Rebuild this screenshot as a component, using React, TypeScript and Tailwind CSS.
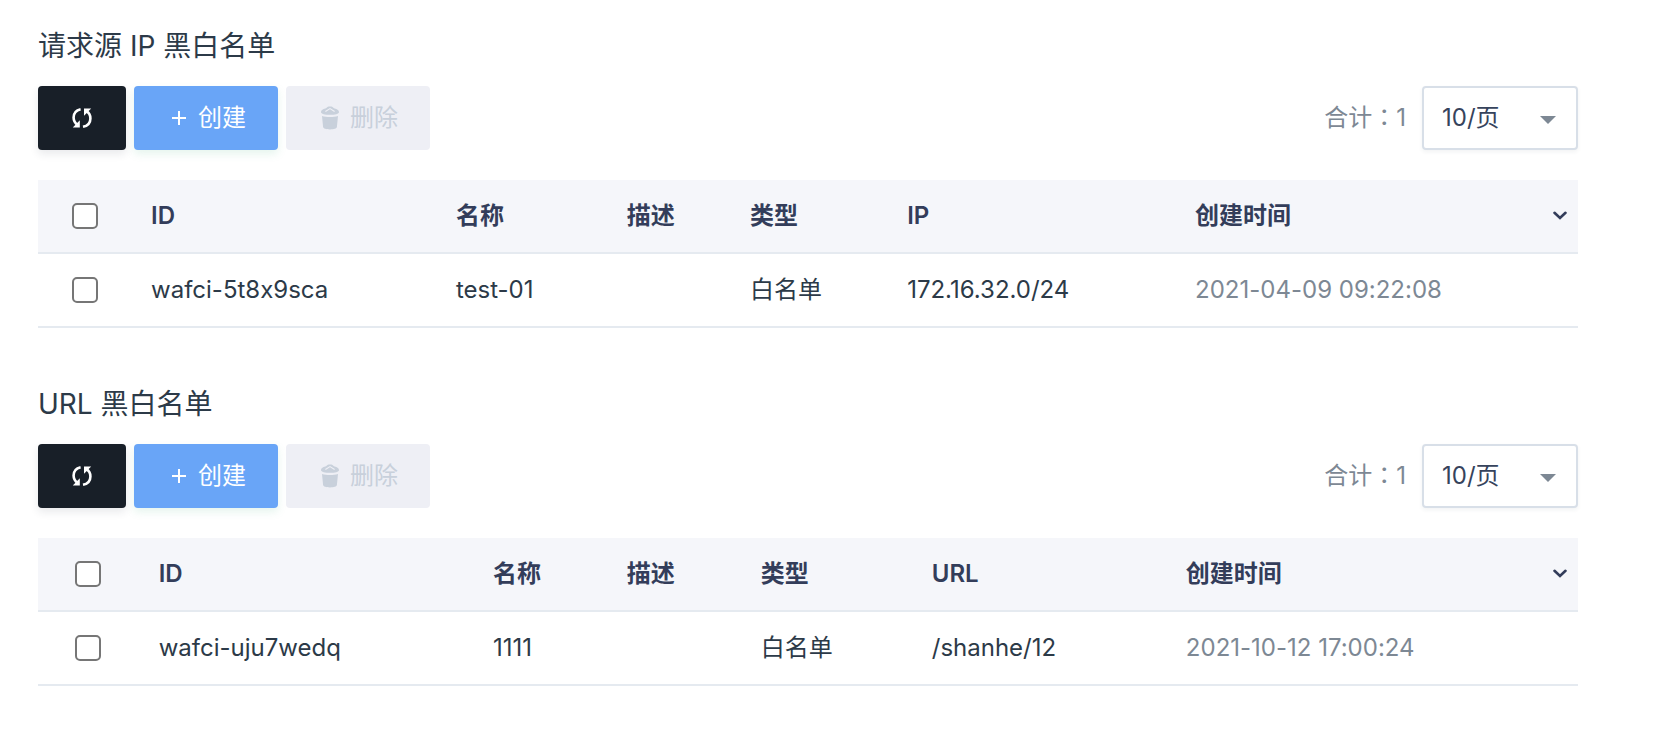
import React from 'react';

type Row = {
  id: string;
  name: string;
  description: string;
  type: string;
  target: string;
  createdAt: string;
};

type SectionProps = {
  slug: string;
  title: string;
  targetLabel: string;
  columns: string[];
  rows: Row[];
};

function RefreshIcon() {
  return (
    <svg width="22" height="22" viewBox="0 0 22 22" fill="none" aria-hidden="true">
      <path d="M9.600 2.200C5 3.200 2.600 6.600 2.600 10.600c0 3 1.500 5.600 3.900 7.200" stroke="currentColor" strokeWidth="2.600" />
      <path d="M12 19.800c4.600-1 7.400-4.400 7.400-8.400 0-3-1.500-5.600-4-7.200" stroke="currentColor" strokeWidth="2.600" />
      <path d="M8.800 13.200V20.400H1.800z" fill="currentColor" />
      <path d="M13 8.800V1.400h7.200z" fill="currentColor" />
    </svg>
  );
}

function PlusIcon() {
  return (
    <svg width="14" height="14" viewBox="0 0 14 14" fill="none" aria-hidden="true">
      <path d="M7 0v14M0 7h14" stroke="currentColor" strokeWidth="2" />
    </svg>
  );
}

function TrashIcon() {
  return (
    <svg width="20" height="24" viewBox="0 0 20 24" fill="currentColor" aria-hidden="true">
      <path d="M1 6.200C1 3.800 4.200 2.800 6 2.300 7.200 1 8.400.6 10 .6s2.800.4 4 1.700c1.800.5 5 1.500 5 3.900 0 1.600-4 2.600-9 2.600S1 7.800 1 6.200z" />
      <path d="M5.400 5.400 10 2.600l4.600 2.800" fill="none" stroke="#eeeff5" strokeWidth="1.200" />
      <path d="M2 10c2.200.8 5 1.100 8 1.100s5.800-.3 8-1.100l-1.100 11c-.2 1.500-3 2.400-6.900 2.400s-6.700-.9-6.900-2.400z" />
    </svg>
  );
}

function ChevronIcon() {
  return (
    <svg width="14" height="10" viewBox="0 0 14 10" fill="none" aria-hidden="true">
      <path d="M1.500 1.800 7 7l5.500-5.200" stroke="currentColor" strokeWidth="2.600" strokeLinecap="round" />
    </svg>
  );
}

function CheckBox({ label }: { label: string }) {
  return (
    <input
      type="checkbox"
      aria-label={label}
      className="mx-auto block size-[26px] appearance-none rounded-[5px] border-2 border-[#767676] bg-white checked:bg-[#69a5f7]"
    />
  );
}

function ListSection({ slug, title, targetLabel, columns, rows }: SectionProps) {
  const headers = ['ID', '名称', '描述', '类型', targetLabel];

  return (
    <section aria-labelledby={`${slug}-title`}>
      <h2 id={`${slug}-title`} className="text-[28px] leading-10">
        {title}
      </h2>

      <div className="mt-5 flex items-center justify-between">
        <div className="flex gap-2">
          <button
            type="button"
            aria-label="刷新"
            className="flex h-16 w-[88px] items-center justify-center rounded bg-[#181f28] text-white shadow-[0_4px_8px_rgba(36,46,66,0.1)]"
          >
            <RefreshIcon />
          </button>
          <button
            type="button"
            className="flex h-16 w-36 items-center justify-center gap-3 rounded bg-[#69a5f7] pl-1.5 text-white shadow-[0_4px_8px_rgba(85,188,138,0.15)]"
          >
            <PlusIcon />
            创建
          </button>
          <button
            type="button"
            disabled
            className="flex h-16 w-36 items-center justify-center gap-2.5 rounded bg-[#eeeff5] pl-0.5 text-[#c8d0db]"
          >
            <TrashIcon />
            删除
          </button>
        </div>

        <div className="flex items-center gap-4">
          <span lang="zh-TW" className="font-[Inter,'Noto_Sans_CJK_TC',sans-serif] text-[#7d8894]">
            合计：{rows.length}
          </span>
          <div className="relative">
            <select
              aria-label="每页条数"
              className="h-16 w-[156px] appearance-none rounded border-2 border-[#d8dfe8] bg-white pl-[18px] text-[#36435c] shadow-[0_2px_4px_rgba(36,46,66,0.06)]"
            >
              <option>10/页</option>
              <option>20/页</option>
              <option>50/页</option>
            </select>
            <svg
              width="16"
              height="8"
              viewBox="0 0 16 8"
              fill="#7d8894"
              aria-hidden="true"
              className="pointer-events-none absolute top-[30px] right-[22px]"
            >
              <path d="M0 0h16L8 8z" />
            </svg>
          </div>
        </div>
      </div>

      <table className="mt-[30px] w-full table-fixed border-separate border-spacing-0 text-left">
        <colgroup>
          {columns.map((width, index) => (
            <col key={index} className={width} />
          ))}
        </colgroup>
        <thead className="bg-[#f5f6fa] text-[#333d5a]">
          <tr className="h-[74px] *:border-b-2 *:border-[#e5eaf0]">
            <th scope="col" className="pr-1">
              <CheckBox label="全选" />
            </th>
            {headers.map((header) => (
              <th key={header} scope="col" className="pl-4 font-semibold">
                {header}
              </th>
            ))}
            <th scope="col" className="pr-[11px] pl-4 font-semibold">
              <div className="flex items-center justify-between">
                创建时间
                <button type="button" aria-label="设置列">
                  <ChevronIcon />
                </button>
              </div>
            </th>
          </tr>
        </thead>
        <tbody>
          {rows.map((row) => (
            <tr key={row.id} className="h-[74px] *:border-b-2 *:border-[#e5eaf0]">
              <td className="pr-1">
                <CheckBox label={`选择 ${row.id}`} />
              </td>
              <td className="pl-4">{row.id}</td>
              <td className="pl-4">{row.name}</td>
              <td className="pl-4">{row.description}</td>
              <td className="pl-4">{row.type}</td>
              <td className="pl-4">{row.target}</td>
              <td className="pl-4 text-[#7d8894]">{row.createdAt}</td>
            </tr>
          ))}
        </tbody>
      </table>
    </section>
  );
}

export default function App() {
  return (
    <main
      lang="zh-CN"
      className="flex min-h-screen flex-col gap-14 bg-white pt-[26px] pr-[76px] pb-8 pl-[38px] font-[Inter,'Noto_Sans_CJK_SC',sans-serif] text-2xl font-normal text-[#2c3a48] [font-feature-settings:'calt'_0]"
    >
      <ListSection
        slug="ip"
        title="请求源 IP 黑白名单"
        targetLabel="IP"
        columns={['w-[6.3%]', 'w-[19.8%]', 'w-[11.1%]', 'w-[8%]', 'w-[10.2%]', 'w-[18.7%]', 'w-auto']}
        rows={[
          {
            id: 'wafci-5t8x9sca',
            name: 'test-01',
            description: '',
            type: '白名单',
            target: '172.16.32.0/24',
            createdAt: '2021-04-09 09:22:08',
          },
        ]}
      />
      <ListSection
        slug="url"
        title="URL 黑白名单"
        targetLabel="URL"
        columns={['w-[6.8%]', 'w-[21.7%]', 'w-[8.7%]', 'w-[8.7%]', 'w-[11.1%]', 'w-[16.5%]', 'w-auto']}
        rows={[
          {
            id: 'wafci-uju7wedq',
            name: '1111',
            description: '',
            type: '白名单',
            target: '/shanhe/12',
            createdAt: '2021-10-12 17:00:24',
          },
        ]}
      />
    </main>
  );
}
